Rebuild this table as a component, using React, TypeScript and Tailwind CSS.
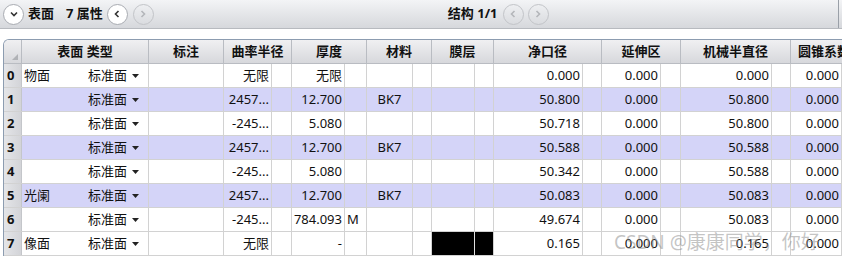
import React from "react";

type Row = {
  name: string;
  radius: string;
  thick: string;
  thickSub: string;
  mat: string;
  clear: string;
  ext: string;
  mech: string;
  conic: string;
  sel?: boolean;
  black?: boolean;
};

const rows: Row[] = [
  { name: "物面", radius: "无限", thick: "无限", thickSub: "", mat: "", clear: "0.000", ext: "0.000", mech: "0.000", conic: "0.000" },
  { name: "", radius: "2457...", thick: "12.700", thickSub: "", mat: "BK7", clear: "50.800", ext: "0.000", mech: "50.800", conic: "0.000", sel: true },
  { name: "", radius: "-245...", thick: "5.080", thickSub: "", mat: "", clear: "50.718", ext: "0.000", mech: "50.800", conic: "0.000" },
  { name: "", radius: "2457...", thick: "12.700", thickSub: "", mat: "BK7", clear: "50.588", ext: "0.000", mech: "50.588", conic: "0.000", sel: true },
  { name: "", radius: "-245...", thick: "5.080", thickSub: "", mat: "", clear: "50.342", ext: "0.000", mech: "50.588", conic: "0.000" },
  { name: "光阑", radius: "2457...", thick: "12.700", thickSub: "", mat: "BK7", clear: "50.083", ext: "0.000", mech: "50.083", conic: "0.000", sel: true },
  { name: "", radius: "-245...", thick: "784.093", thickSub: "M", mat: "", clear: "49.674", ext: "0.000", mech: "50.083", conic: "0.000" },
  { name: "像面", radius: "无限", thick: "-", thickSub: "", mat: "", clear: "0.165", ext: "0.000", mech: "0.165", conic: "0.000", black: true },
];

const headers = ["标注", "曲率半径", "厚度", "材料", "膜层", "净口径", "延伸区", "机械半直径"];

const grid =
  "grid grid-cols-[18px_127px_75px_48px_20px_53px_22px_46px_19px_43px_19px_89px_19px_59px_20px_91px_19px_51px_60px]";

const Chevron = ({ dir, muted }: { dir: "down" | "left" | "right"; muted?: boolean }) => {
  const d = dir === "down" ? "M3 4.5 L6 7.5 L9 4.5" : dir === "left" ? "M7.5 3 L4.5 6 L7.5 9" : "M4.5 3 L7.5 6 L4.5 9";
  return (
    <svg width="12" height="12" viewBox="0 0 12 12">
      <path d={d} fill="none" stroke={muted ? "#b4b6ba" : "#333"} strokeWidth="1.6" />
    </svg>
  );
};

const RoundBtn = ({ dir, muted }: { dir: "down" | "left" | "right"; muted?: boolean }) => (
  <div
    className={`w-[21px] h-[21px] rounded-full flex items-center justify-center border ${
      muted ? "border-[#c2c4c8] bg-transparent" : "border-[#a9acb2] bg-white"
    }`}
  >
    <Chevron dir={dir} muted={muted} />
  </div>
);

const Cell = ({ children, className = "" }: { children?: React.ReactNode; className?: string }) => (
  <div className={`h-full border-r border-[#d2d2d2] flex items-center overflow-hidden whitespace-nowrap ${className}`}>
    {children}
  </div>
);

export default function App() {
  return (
    <div
      className="relative w-[842px] h-[257px] overflow-hidden bg-white text-[13px] text-[#111]"
      style={{ fontFamily: '"Noto Sans", "Noto Sans CJK SC", sans-serif' }}
    >
      {/* toolbar */}
      <div className="h-[29px] border-b border-[#b7babf] bg-gradient-to-b from-[#f3f4f6] to-[#d6d8dc] flex items-center pl-[3px]">
        <RoundBtn dir="down" />
        <span className="ml-[4px] font-bold">表面</span>
        <span className="ml-[12px] font-bold">7 属性</span>
        <div className="ml-[4px]">
          <RoundBtn dir="left" />
        </div>
        <div className="ml-[5px]">
          <RoundBtn dir="right" muted />
        </div>
        <span className="ml-[294px] font-bold">结构 1/1</span>
        <div className="ml-[5px]">
          <RoundBtn dir="left" muted />
        </div>
        <div className="ml-[4px]">
          <RoundBtn dir="right" muted />
        </div>
        <div className="ml-auto mr-[3px] h-full border-r border-[#9aa0a8]" />
      </div>

      {/* table */}
      <div className="mt-[10px] ml-[3px] border-l border-t border-[#8c9cb0] rounded-tl-[6px] overflow-hidden">
        <div className={`${grid} h-[24px] border-b border-[#b9bcc2] bg-gradient-to-b from-[#f0f0f2] to-[#d7d8dc] font-bold`}>
          <div className="h-full border-r border-[#b9bcc2] relative">
            <svg className="absolute right-[3px] bottom-[3px]" width="6" height="6" viewBox="0 0 6 6">
              <path d="M6 0 L6 6 L0 6 Z" fill="#b0b2b6" />
            </svg>
          </div>
          <div className="h-full border-r border-[#b9bcc2] flex items-center justify-center">表面 类型</div>
          {headers.map((h, i) => (
            <div
              key={h}
              className={`h-full border-r border-[#b9bcc2] flex items-center justify-center whitespace-nowrap overflow-hidden ${
                i === 0 ? "" : "col-span-2"
              }`}
            >
              {h}
            </div>
          ))}
          <div className="col-span-2 h-full flex items-center pl-[7px] whitespace-nowrap overflow-hidden">圆锥系数</div>
        </div>
        {rows.map((r, i) => (
          <div
            key={i}
            className={`${grid} h-[24px] border-b border-[#d2d2d2] ${r.sel ? "bg-[#d4d4f8]" : "bg-white"}`}
          >
            <div className="h-full bg-gradient-to-r from-[#e4e5e8] to-[#d3d4d8] border-r border-[#c4c6ca] flex items-center pl-[3px] font-bold">
              {i}
            </div>
            <Cell>
              <span className="w-[66px] pl-[2px]">{r.name}</span>
              <span>标准面</span>
              <svg className="ml-[5px]" width="7" height="4" viewBox="0 0 7 4">
                <path d="M0 0 L7 0 L3.5 4 Z" fill="#222" />
              </svg>
            </Cell>
            <Cell />
            <Cell className="justify-end pr-[2px]">{r.radius}</Cell>
            <Cell />
            <Cell className="justify-end pr-[2px]">{r.thick}</Cell>
            <Cell className="pl-[2px]">{r.thickSub}</Cell>
            <Cell className="justify-center">{r.mat}</Cell>
            <Cell />
            <Cell className={r.black ? "bg-black border-[#e0e0e0]" : ""} />
            <Cell className={r.black ? "bg-black" : ""} />
            <Cell className="justify-end pr-[2px]">{r.clear}</Cell>
            <Cell />
            <Cell className="justify-end pr-[2px]">{r.ext}</Cell>
            <Cell />
            <Cell className="justify-end pr-[2px]">{r.mech}</Cell>
            <Cell />
            <Cell className="justify-end pr-[2px]">{r.conic}</Cell>
            <Cell />
          </div>
        ))}
      </div>

      {/* watermark */}
      <div className="absolute left-[614px] top-[228px] text-[19px] text-[#8a8a8a]/50 whitespace-nowrap pointer-events-none">
        CSDN @康康同学，你好
      </div>
    </div>
  );
}
